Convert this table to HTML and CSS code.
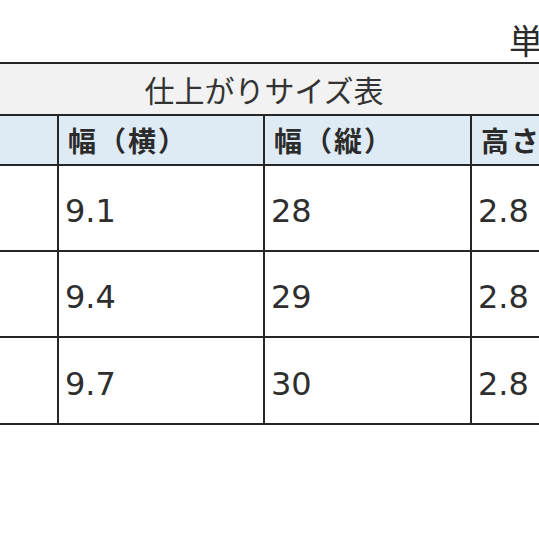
FILE: index.html
```html
<!DOCTYPE html>
<html lang="ja">
<head>
<meta charset="utf-8">
<link rel="stylesheet" href="styles.css">
</head>
<body>
<div class="wrap">
  <div class="unit">単位：cm</div>
  <table class="size">
    <colgroup>
      <col class="c1"><col class="c2"><col class="c3"><col class="c4">
    </colgroup>
    <tr class="title-row"><td colspan="4" class="title">仕上がりサイズ表</td></tr>
    <tr class="head-row">
      <td class="head"></td>
      <td class="head">幅（横）</td>
      <td class="head">幅（縦）</td>
      <td class="head">高さ</td>
    </tr>
    <tr class="data-row"><td></td><td>9.1</td><td>28</td><td>2.8</td></tr>
    <tr class="data-row"><td></td><td>9.4</td><td>29</td><td>2.8</td></tr>
    <tr class="data-row last"><td></td><td>9.7</td><td>30</td><td>2.8</td></tr>
  </table>
</div>
</body>
</html>
```
FILE: styles.css
```css
html, body {
  margin: 0;
  padding: 0;
  background: #ffffff;
  overflow: hidden;
}
body {
  width: 539px;
  height: 539px;
}
.wrap {
  margin-left: -150px;
  width: 826px;
}
.unit {
  height: 62px;
  box-sizing: border-box;
  padding-top: 21px;
  padding-left: 659px;
  font-family: "Noto Sans CJK JP", sans-serif;
  font-size: 34px;
  line-height: 38px;
  color: #2a2a2a;
  white-space: nowrap;
}
.size {
  border-collapse: collapse;
  table-layout: fixed;
  width: 826px;
}
.c1 { width: 207px; }
.c2 { width: 206px; }
.c3 { width: 207px; }
.c4 { width: 206px; }
.size td {
  border: 2px solid #262626;
  padding: 0 0 0 7px;
  color: #2e2e2e;
}
.title-row td {
  height: 50px;
  background: #f2f2f2;
  text-align: center;
  padding: 0;
  font-family: "Noto Sans CJK JP", sans-serif;
  font-size: 30px;
  line-height: 40px;
  color: #333333;
}
.head-row td {
  height: 48px;
  background: #deeaf4;
  padding-left: 9px;
  font-family: "Noto Sans CJK JP", sans-serif;
  font-weight: 700;
  font-size: 28px;
  line-height: 32px;
  letter-spacing: 2px;
  color: #2b2b2b;
}
.data-row td {
  height: 86px;
  padding-left: 6px;
  font-family: "DejaVu Sans", sans-serif;
  font-size: 32px;
  line-height: 36px;
  padding-top: 6px;
  box-sizing: border-box;
  vertical-align: middle;
}
.data-row.last td {
  height: 87px;
}
```
